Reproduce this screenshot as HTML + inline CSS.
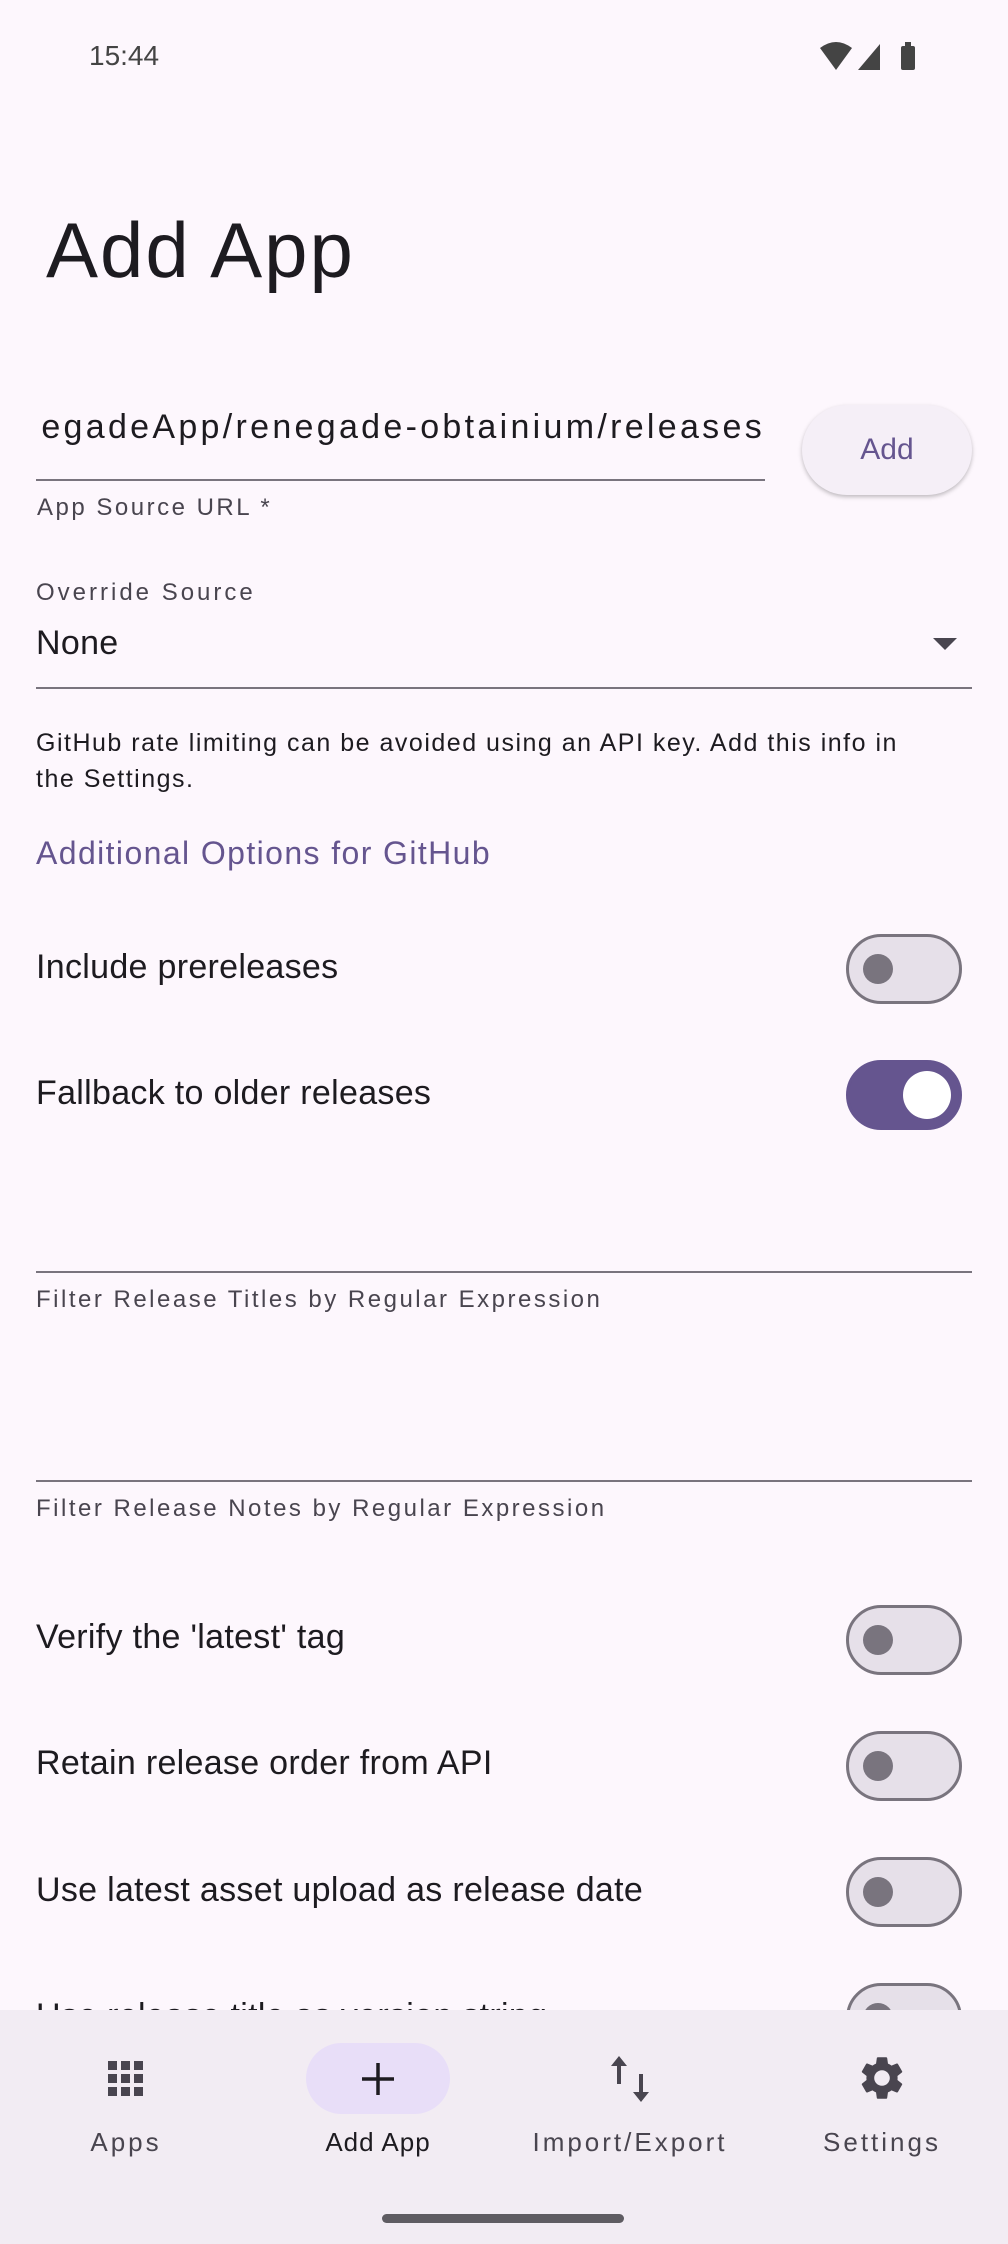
<!DOCTYPE html>
<html><head><meta charset="utf-8"><style>
*{margin:0;padding:0;box-sizing:border-box}
body{width:1008px;height:2244px;background:#fdf7fd;font-family:"Liberation Sans",sans-serif;color:#1d1b20;position:relative;overflow:hidden}
.a{position:absolute;white-space:nowrap}
.lbl{font-size:34px;line-height:40px;letter-spacing:0.3px}
.sm{font-size:24px;color:#49454f;line-height:30px;letter-spacing:2.5px}
.line{position:absolute;left:36px;height:2px;background:#79747e}
.sw{position:absolute;left:846px;width:116px;height:70px;border-radius:35px;border:3px solid #79747e;background:#e6e0e9}
.sw::after{content:"";position:absolute;left:14px;top:17px;width:30px;height:30px;border-radius:50%;background:#79747e}
.sw.on{background:#65558f;border-color:#65558f}
.sw.on::after{left:auto;right:8px;top:8px;width:48px;height:48px;background:#fff}
.nav{position:absolute;left:0;top:2010px;width:1008px;height:234px;background:#f2ecf3}
.ni{position:absolute;width:240px;text-align:center;font-size:26px;color:#49454f;top:117px;letter-spacing:3px}
</style></head><body>
<div class="a" style="left:89px;top:40px;font-size:28px;color:#444">15:44</div>
<svg class="a" style="left:818px;top:40px" width="120" height="32" viewBox="0 0 120 32">
<path d="M2 8 Q18 -4 34 8 L18 30 Z" fill="#444"/>
<path d="M40 30 L62 4 L62 30 Z" fill="#444"/>
<rect x="83" y="6" width="14" height="24" rx="2" fill="#444"/><rect x="87" y="2" width="6" height="5" fill="#444"/>
</svg>
<div class="a" style="left:46px;top:205px;font-size:78px;line-height:90px;letter-spacing:2px">Add App</div>
<div style="position:absolute;left:36px;top:405px;width:729px;overflow:hidden;height:50px"><div class="a lbl" style="right:0;top:2px;letter-spacing:3.3px">negadeApp/renegade-obtainium/releases</div></div>
<div class="line" style="top:479px;width:729px"></div>
<div class="a" style="left:802px;top:405px;width:170px;height:90px;border-radius:45px;background:#f5eff7;box-shadow:0 2px 4px rgba(0,0,0,.25);color:#65558f;font-size:30px;text-align:center;line-height:90px">Add</div>
<div class="a sm" style="left:37px;top:493px">App Source URL *</div>
<div class="a sm" style="left:36px;top:578px;letter-spacing:3px">Override Source</div>
<div class="a lbl" style="left:36px;top:623px">None</div>
<div class="a" style="left:933px;top:638px;width:0;height:0;border-left:12px solid transparent;border-right:12px solid transparent;border-top:12px solid #49454f"></div>
<div class="line" style="top:687px;width:936px"></div>
<div class="a" style="left:36px;top:725px;font-size:25px;line-height:36px;white-space:normal;width:900px;letter-spacing:1.5px">GitHub rate limiting can be avoided using an API key. Add this info in the Settings.</div>
<div class="a" style="left:36px;top:835px;font-size:32px;color:#65558f;letter-spacing:1.4px">Additional Options for GitHub</div>
<div class="a lbl" style="left:36px;top:947px">Include prereleases</div><div class="sw" style="top:934px"></div>
<div class="a lbl" style="left:36px;top:1073px">Fallback to older releases</div><div class="sw on" style="top:1060px"></div>
<div class="line" style="top:1271px;width:936px"></div>
<div class="a sm" style="left:36px;top:1285px">Filter Release Titles by Regular Expression</div>
<div class="line" style="top:1480px;width:936px"></div>
<div class="a sm" style="left:36px;top:1494px">Filter Release Notes by Regular Expression</div>
<div class="a lbl" style="left:36px;top:1617px">Verify the 'latest' tag</div><div class="sw" style="top:1605px"></div>
<div class="a lbl" style="left:36px;top:1743px">Retain release order from API</div><div class="sw" style="top:1731px"></div>
<div class="a lbl" style="left:36px;top:1870px">Use latest asset upload as release date</div><div class="sw" style="top:1857px"></div>
<div class="a lbl" style="left:36px;top:1996px">Use release title as version string</div><div class="sw" style="top:1983px"></div>
<div class="nav">
<div class="a" style="left:306px;top:33px;width:144px;height:71px;border-radius:36px;background:#e8def8"></div>
<svg class="a" style="left:107px;top:50px" width="38" height="38" viewBox="0 0 38 38" fill="#49454f">
<rect x="1" y="1" width="9" height="9"/><rect x="14" y="1" width="9" height="9"/><rect x="27" y="1" width="9" height="9"/>
<rect x="1" y="14" width="9" height="9"/><rect x="14" y="14" width="9" height="9"/><rect x="27" y="14" width="9" height="9"/>
<rect x="1" y="27" width="9" height="9"/><rect x="14" y="27" width="9" height="9"/><rect x="27" y="27" width="9" height="9"/></svg>
<svg class="a" style="left:360px;top:51px" width="36" height="36" viewBox="0 0 36 36"><path d="M18 2V34M2 18H34" stroke="#1d1b20" stroke-width="3.5"/></svg>
<svg class="a" style="left:610px;top:46px" width="40" height="46" viewBox="0 0 40 46" fill="#49454f"><path d="M9 0 L17 10 H11 V28 H7 V10 H1 Z"/><path d="M31 46 L23 36 H29 V18 H33 V36 H39 Z"/></svg>
<svg class="a" style="left:856px;top:42px" width="52" height="52" viewBox="0 0 24 24"><path fill="#49454f" d="M19.14 12.94c.04-.3.06-.61.06-.94s-.02-.64-.07-.94l2.03-1.58a.49.49 0 0 0 .12-.61l-1.92-3.32a.49.49 0 0 0-.59-.22l-2.39.96c-.5-.38-1.03-.7-1.62-.94l-.36-2.54a.48.48 0 0 0-.48-.41h-3.84c-.24 0-.43.17-.47.41l-.36 2.54c-.59.24-1.13.57-1.620.94l-2.39-.96a.48.48 0 0 0-.59.22L2.74 8.87c-.12.21-.08.47.12.61l2.03 1.58c-.05.3-.09.63-.09.94s.02.64.07.94l-2.03 1.58a.49.49 0 0 0-.12.61l1.92 3.32c.12.22.37.29.59.22l2.39-.96c.5.38 1.03.7 1.62.94l.36 2.54c.05.24.24.41.48.41h3.84c.24 0 .44-.17.47-.41l.36-2.54c.59-.24 1.13-.56 1.62-.94l2.39.96c.22.08.47 0 .59-.22l1.92-3.32c.12-.22.07-.47-.12-.61l-2.01-1.58zM12 15.6c-1.98 0-3.6-1.62-3.6-3.6s1.62-3.6 3.6-3.6 3.6 1.62 3.6 3.6-1.62 3.6-3.6 3.6z"/></svg>
<div class="ni" style="left:6px">Apps</div>
<div class="ni" style="left:258px;color:#1d1b20;letter-spacing:1px">Add App</div>
<div class="ni" style="left:510px">Import/Export</div>
<div class="ni" style="left:762px">Settings</div>
<div class="a" style="left:382px;top:204px;width:242px;height:9px;border-radius:5px;background:#5f5c62"></div>
</div>
</body></html>
